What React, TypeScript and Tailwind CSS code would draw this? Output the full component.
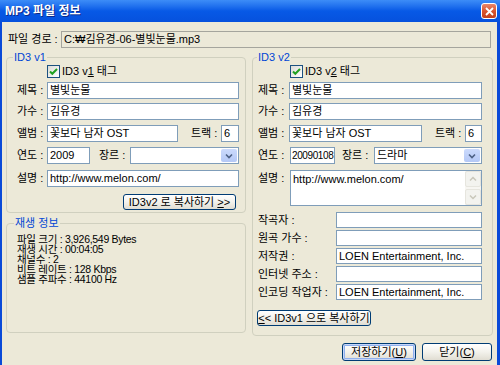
import React from "react"

const box = "h-[17px] border border-[#7F9DB9] bg-white px-[2px] flex items-center text-[11px] leading-none whitespace-nowrap overflow-hidden"
const xpBtn = "h-[16px] rounded-[3px] border border-[#003C74] bg-linear-to-b from-white via-[#F3F2EC] to-[#E0DDD2] flex items-center justify-center text-[11px] leading-none whitespace-nowrap"

function Check({ label }: { label: React.ReactNode }) {
  return (
    <div className="h-[13px] flex items-center gap-[2px] text-[11px] leading-none">
      <div className="w-[13px] h-[13px] border border-[#1C5180] bg-linear-to-br from-[#DCDCD7] to-white flex items-center justify-center">
        <svg width="11" height="11" viewBox="0 0 11 11"><path d="M2 5.5 L4.3 7.8 L9 3" fill="none" stroke="#21A121" strokeWidth="2" /></svg>
      </div>
      <span>{label}</span>
    </div>
  )
}

function Combo({ value }: { value?: string }) {
  return (
    <div className="flex-1 h-[17px] border border-[#7F9DB9] bg-white flex items-stretch text-[11px] leading-none">
      <div className="flex-1 flex items-center px-[2px]">{value}</div>
      <div className="w-[16px] m-px rounded-[2px] bg-linear-to-b from-[#CBDAFC] to-[#B4C8F6] flex items-center justify-center">
        <svg width="8" height="6" viewBox="0 0 8 6"><path d="M1 1.5 L4 4.5 L7 1.5" fill="none" stroke="#4D6185" strokeWidth="1.6" /></svg>
      </div>
    </div>
  )
}

function Row({ label, lw, children, className = "" }: { label: string; lw: string; children: React.ReactNode; className?: string }) {
  return (
    <div className={`flex items-center h-[17px] ${className}`}>
      <span className={`${lw} shrink-0 text-[11px] leading-none whitespace-nowrap`}>{label}</span>
      {children}
    </div>
  )
}

function Group({ title, className, children, legendClass = "ml-[6px]" }: { title: string; className: string; children: React.ReactNode; legendClass?: string }) {
  return (
    <fieldset className={`border border-[#D0D0BF] rounded-[4px] ${className}`}>
      <legend className={`${legendClass} px-px text-[11px] leading-[13px] text-[#0046D5]`}>{title}</legend>
      {children}
    </fieldset>
  )
}

export default function App() {
  return (
    <div className="w-[500px] h-[365px] overflow-hidden flex flex-col bg-[#0A4AD8] text-black font-['Liberation_Sans','Noto_Sans_CJK_KR',sans-serif]">
      {/* title bar */}
      <div className="h-[22px] shrink-0 flex items-center justify-between pl-[5px] pr-[3px] bg-linear-to-b from-[#3D8DF7] via-[#0759E6] to-[#0651DD]">
        <span className="text-white font-bold text-[12px] leading-none [text-shadow:1px_1px_0_#0B2A8A]">MP3 파일 정보</span>
        <div className="w-[16px] h-[16px] rounded-[3px] border border-white bg-linear-to-b from-[#E8866A] via-[#D9552F] to-[#C2401C] flex items-center justify-center">
          <svg width="9" height="9" viewBox="0 0 9 9"><path d="M1 1 L8 8 M8 1 L1 8" stroke="white" strokeWidth="1.8" /></svg>
        </div>
      </div>

      <div className="flex-1 ml-[2px] mr-[3px] bg-[#ECE9D8] flex flex-col">
        {/* file path */}
        <div className="mt-[9px] pl-[6px] pr-[6px] flex items-center">
          <span className="w-[53px] shrink-0 text-[11px] leading-none">파일 경로 :</span>
          <div className="flex-1 h-[17px] border border-[#A5A59D] bg-[#ECE9D8] px-[2px] flex items-center text-[11px] leading-none">C:₩김유경-06-별빛눈물.mp3</div>
        </div>

        <div className="mt-[3px] pl-[4px] flex gap-[6px]">
          {/* left column */}
          <div className="w-[240px] flex flex-col gap-[4px]">
            <Group title="ID3 v1" className="h-[162px]">
              <div className="pl-[10px] pr-[6px] flex flex-col">
                <div className="mt-px pl-[30px]"><Check label={<>ID3 v<u>1</u> 태그</>} /></div>
                <Row label="제목 :" lw="w-[30px]" className="mt-[4px]"><div className={`${box} flex-1`}>별빛눈물</div></Row>
                <Row label="가수 :" lw="w-[30px]" className="mt-[4px]"><div className={`${box} flex-1`}>김유경</div></Row>
                <Row label="앨범 :" lw="w-[30px]" className="mt-[5px]">
                  <div className={`${box} w-[131px]`}>꽃보다 남자 OST</div>
                  <span className="ml-[13px] w-[30px] text-[11px] leading-none">트랙 :</span>
                  <div className={`${box} w-[18px]`}>6</div>
                </Row>
                <Row label="연도 :" lw="w-[30px]" className="mt-[5px]">
                  <div className={`${box} w-[43px]`}>2009</div>
                  <span className="ml-[9px] w-[31px] text-[11px] leading-none">장르 :</span>
                  <Combo />
                </Row>
                <Row label="설명 :" lw="w-[30px]" className="mt-[6px]"><div className={`${box} flex-1`}>http://www.melon.com/</div></Row>
                <div className="mt-[7px] flex justify-end pr-[3px]">
                  <div className={`${xpBtn} w-[113px]`}>ID3v2 로 복사하기&nbsp;<u>&gt;</u>&gt;</div>
                </div>
              </div>
            </Group>
            <Group title="재생 정보" className="h-[116px]" legendClass="ml-[7px]">
              <div className="mt-[4px] pl-[10px] text-[10.5px] leading-[10px] tracking-[-0.3px]">
                <p>파일 크기 : 3,926,549 Bytes</p>
                <p>재생 시간 : 00:04:05</p>
                <p>채널수 : 2</p>
                <p>비트 레이트 : 128 Kbps</p>
                <p>샘플 주파수 : 44100 Hz</p>
              </div>
            </Group>
          </div>

          {/* right column */}
          <Group title="ID3 v2" className="w-[241px] h-[285px]" legendClass="ml-[4px]">
            <div className="pl-[5px] pr-[10px] flex flex-col">
              <div className="mt-px pl-[32px]"><Check label={<>ID3 v<u>2</u> 태그</>} /></div>
              <Row label="제목 :" lw="w-[31px]" className="mt-[4px]"><div className={`${box} flex-1`}>별빛눈물</div></Row>
              <Row label="가수 :" lw="w-[31px]" className="mt-[4px]"><div className={`${box} flex-1`}>김유경</div></Row>
              <Row label="앨범 :" lw="w-[31px]" className="mt-[5px]">
                <div className={`${box} w-[133px]`}>꽃보다 남자 OST</div>
                <span className="ml-[13px] w-[30px] text-[11px] leading-none">트랙 :</span>
                <div className={`${box} w-[17px]`}>6</div>
              </Row>
              <Row label="연도 :" lw="w-[32px]" className="mt-[5px]">
                <div className={`${box} w-[45px] !px-[1px] !text-[10px] tracking-[-0.4px]`}>20090108</div>
                <span className="ml-[7px] w-[32px] text-[11px] leading-none">장르 :</span>
                <Combo value="드라마" />
              </Row>
              <div className="mt-[6px] flex items-start">
                <span className="w-[32px] shrink-0 pt-[3px] text-[11px] leading-none">설명 :</span>
                <div className="flex-1 h-[36px] border border-[#7F9DB9] bg-white flex">
                  <div className="flex-1 px-[2px] pt-[3px] text-[11px] leading-none">http://www.melon.com/</div>
                  <div className="w-[16px] bg-[#F7F6F2] flex flex-col justify-between">
                    <div className="h-[16px] rounded-[2px] border border-[#E6E5DE] bg-[#F3F3EF] flex items-center justify-center">
                      <svg width="8" height="6" viewBox="0 0 8 6"><path d="M1 4.5 L4 1.5 L7 4.5" fill="none" stroke="#C9C7BA" strokeWidth="1.5" /></svg>
                    </div>
                    <div className="h-[16px] rounded-[2px] border border-[#E6E5DE] bg-[#F3F3EF] flex items-center justify-center">
                      <svg width="8" height="6" viewBox="0 0 8 6"><path d="M1 1.5 L4 4.5 L7 1.5" fill="none" stroke="#C9C7BA" strokeWidth="1.5" /></svg>
                    </div>
                  </div>
                </div>
              </div>
              <Row label="작곡자 :" lw="w-[78px]" className="mt-[6px] !h-[16px]"><div className={`${box} !h-[16px] flex-1`}></div></Row>
              <Row label="원곡 가수 :" lw="w-[78px]" className="mt-[2px] !h-[16px]"><div className={`${box} !h-[16px] flex-1`}></div></Row>
              <Row label="저작권 :" lw="w-[78px]" className="mt-[2px] !h-[16px]"><div className={`${box} !h-[16px] flex-1`}>LOEN Entertainment, Inc.</div></Row>
              <Row label="인터넷 주소 :" lw="w-[78px]" className="mt-[2px] !h-[16px]"><div className={`${box} !h-[16px] flex-1`}></div></Row>
              <Row label="인코딩 작업자 :" lw="w-[78px]" className="mt-[2px] !h-[16px]"><div className={`${box} !h-[16px] flex-1`}>LOEN Entertainment, Inc.</div></Row>
              <div className="mt-[10px] -ml-px">
                <div className={`${xpBtn} w-[114px]`}><u>&lt;</u>&lt;&nbsp;ID3v1 으로 복사하기</div>
              </div>
            </div>
          </Group>
        </div>

        {/* bottom buttons */}
        <div className="mt-[7px] pr-[5px] flex justify-end gap-[6px]">
          <div className={`${xpBtn} !h-[18px] w-[74px] shadow-[inset_0_0_0_1px_#C6D6F8,inset_0_0_0_2px_#8FB0EE]`}>저장하기(<u>U</u>)</div>
          <div className={`${xpBtn} !h-[18px] w-[70px]`}>닫기(<u>C</u>)</div>
        </div>
      </div>
    </div>
  )
}
